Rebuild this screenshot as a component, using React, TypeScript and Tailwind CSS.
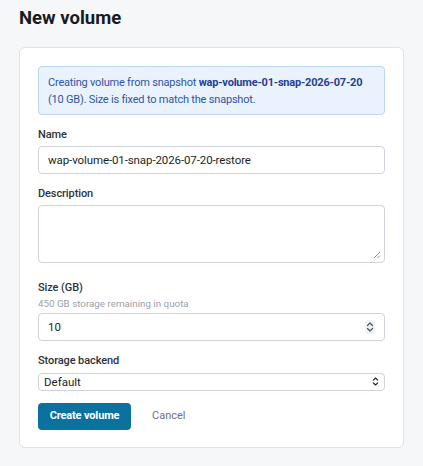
import React from "react";

function UpDown({ className }: { className?: string }) {
  return (
    <svg viewBox="0 0 8 12" className={className} fill="none" stroke="currentColor" strokeWidth="1.3" strokeLinecap="round" strokeLinejoin="round">
      <path d="M1.5 4.5 L4 2 L6.5 4.5" />
      <path d="M1.5 7.5 L4 10 L6.5 7.5" />
    </svg>
  );
}

export default function App() {
  return (
    <div className="min-h-[466px] w-full bg-[#f6f7f9] px-[19px] pt-[4px] pb-[18px]" style={{ fontFamily: "Roboto, 'Noto Sans', sans-serif" }}>
      <h1 className="text-[18.5px] font-bold leading-[28px] text-[#161b22] mb-[15px]">New volume</h1>
      <div className="rounded-[6px] border border-[#dfe2e7] bg-white px-[18px] pt-[18px] pb-[17px]">
        <div className="rounded-[4px] border border-[#bcd6f7] bg-[#eaf2fd] px-[9px] pt-[6.5px] pb-[6.5px] text-[11px] leading-[17px] tracking-[-0.2px] text-[#2c55a6]">
          Creating volume from snapshot <span className="font-bold text-[#1e3f96]">wap-volume-01-snap-2026-07-20</span> (10 GB). Size is fixed to match the snapshot.
        </div>
        <label className="mt-[12px] block text-[11px] font-medium leading-[16px] tracking-[-0.1px] text-[#2d333b]">Name</label>
        <input
          className="mt-[3px] block h-[28px] w-full rounded-[4px] border border-[#cfd3db] bg-white px-[9px] text-[11.5px] tracking-[-0.1px] text-[#1b1f24] outline-none"
          defaultValue="wap-volume-01-snap-2026-07-20-restore"
        />
        <label className="mt-[12px] block text-[11px] font-medium leading-[16px] tracking-[-0.1px] text-[#2d333b]">Description</label>
        <div className="relative mt-[3px]">
          <textarea className="block h-[58px] w-full resize-none rounded-[4px] border border-[#cfd3db] bg-white px-[9px] py-[6px] text-[11.5px] outline-none" />
          <svg viewBox="0 0 8 8" className="pointer-events-none absolute bottom-[4px] right-[4px] h-[8px] w-[8px]" stroke="#8a8f98" strokeWidth="1">
            <path d="M7 1 L1 7 M7 4.5 L4.5 7" />
          </svg>
        </div>
        <label className="mt-[17px] block text-[11px] font-medium leading-[16px] tracking-[-0.1px] text-[#2d333b]">Size (GB)</label>
        <div className="mt-[1px] text-[9.8px] leading-[14px] text-[#9aa1ab]">450 GB storage remaining in quota</div>
        <div className="relative mt-[2px]">
          <input
            type="text"
            className="block h-[28px] w-full rounded-[4px] border border-[#cfd3db] bg-white px-[9px] text-[11.5px] text-[#1b1f24] outline-none"
            defaultValue="10"
          />
          <div className="pointer-events-none absolute right-[10px] top-[7px] flex h-[14px] w-[10px] items-center justify-center rounded-[3px] bg-[#f0f1f3] text-[#555a61]">
            <UpDown className="h-[12px] w-[8px]" />
          </div>
        </div>
        <label className="mt-[12px] block text-[11px] font-medium leading-[16px] tracking-[-0.1px] text-[#2d333b]">Storage backend</label>
        <div className="relative mt-[4px]">
          <select className="block h-[18px] w-full appearance-none rounded-[4px] border border-[#cfd3db] bg-white pl-[5px] text-[11.5px] leading-[16px] text-[#1b1f24] outline-none">
            <option>Default</option>
          </select>
          <UpDown className="pointer-events-none absolute right-[6px] top-[3px] h-[11px] w-[7px] text-[#1b1f24]" />
        </div>
        <div className="mt-[12px] flex items-center gap-[21px]">
          <button className="h-[27px] w-[93px] rounded-[4px] bg-[#0b72a0] text-[11px] font-bold tracking-[-0.15px] text-white">Create volume</button>
          <button className="text-[11px] text-[#6b7280]">Cancel</button>
        </div>
      </div>
    </div>
  );
}
